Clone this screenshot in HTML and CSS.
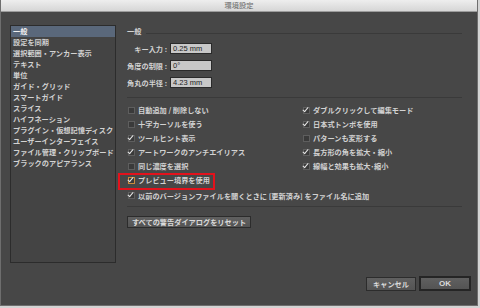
FILE: index.html
```html
<!DOCTYPE html>
<html lang="ja">
<head>
  <meta charset="UTF-8">
  <title>環境設定</title>
  <link rel="stylesheet" href="styles.css">
</head>
<body>
  <div class="window">
    <div class="titlebar">環境設定</div>

    <div class="content">
      <!-- Category list -->
      <ul class="sidebar">
        <li class="selected">一般</li>
        <li>設定を同期</li>
        <li>選択範囲・アンカー表示</li>
        <li>テキスト</li>
        <li>単位</li>
        <li>ガイド・グリッド</li>
        <li>スマートガイド</li>
        <li>スライス</li>
        <li>ハイフネーション</li>
        <li>プラグイン・仮想記憶ディスク</li>
        <li>ユーザーインターフェイス</li>
        <li>ファイル管理・クリップボード</li>
        <li>ブラックのアピアランス</li>
      </ul>

      <div class="main">
        <div class="heading"><span>一般</span><span class="rule"></span></div>

        <div class="fields">
          <div class="field"><label>キー入力 :</label><span class="input">0.25 mm</span></div>
          <div class="field"><label>角度の制限 :</label><span class="input">0°</span></div>
          <div class="field"><label>角丸の半径 :</label><span class="input">4.23 mm</span></div>
        </div>

        <div class="separator"></div>

        <div class="checks">
          <div class="check"><span class="box"></span>自動追加 / 削除しない</div>
          <div class="check on"><span class="box"></span>ダブルクリックして編集モード</div>
          <div class="check"><span class="box"></span>十字カーソルを使う</div>
          <div class="check on"><span class="box"></span>日本式トンボを使用</div>
          <div class="check on"><span class="box"></span>ツールヒント表示</div>
          <div class="check"><span class="box"></span>パターンも変形する</div>
          <div class="check on"><span class="box"></span>アートワークのアンチエイリアス</div>
          <div class="check on"><span class="box"></span>長方形の角を拡大・縮小</div>
          <div class="check"><span class="box"></span>同じ濃度を選択</div>
          <div class="check on"><span class="box"></span>線幅と効果も拡大･縮小</div>
          <div class="check on focus marked"><span class="box"></span>プレビュー境界を使用</div>
          <div class="check on wide"><span class="box"></span>以前のバージョンファイルを開くときに [更新済み] をファイル名に追加</div>
        </div>

        <div class="separator lower"></div>

        <button class="btn reset">すべての警告ダイアログをリセット</button>
      </div>
    </div>

    <div class="footer">
      <button class="btn cancel">キャンセル</button>
      <button class="btn ok">OK</button>
    </div>
  </div>
</body>
</html>
```

FILE: styles.css
```css
body {
  margin: 0;
  background-color: #d4d4d4;
  font-family: "Noto Sans CJK JP", "Liberation Sans", sans-serif;
  font-size: 7.2px;
  font-weight: bold;
  color: #d2d2d2;
}

.window {
  width: 476px;
  height: 305px;
  background-color: #474747;
  border: 1px solid #6e6e6e;
  border-top: none;
  display: flex;
  flex-direction: column;
}

.titlebar {
  height: 11px;
  line-height: 11px;
  text-align: center;
  color: #666;
  font-weight: normal;
  background: linear-gradient(#eeeeee, #d6d6d6);
  border-bottom: 1px solid #9c9c9c;
}

.content {
  display: flex;
  padding: 13px 0 0 9px;
}

/* left list */
.sidebar {
  list-style: none;
  margin: 0;
  padding: 0;
  width: 104px;
  height: 236px;
  background-color: #444;
  border: 1px solid #2c2c2c;
}

.sidebar li {
  height: 11px;
  line-height: 11px;
  padding-left: 2px;
  white-space: nowrap;
}

.sidebar li.selected {
  background-color: #5a687b;
  color: #f0f0f0;
}

/* right side */
.main {
  margin-left: 11px;
  width: 335px;
}

.heading {
  display: flex;
  margin-top: 1px;
  height: 11px;
  line-height: 11px;
}

.heading .rule {
  flex: 1;
  margin: 7px 0 0 5px;
  height: 0;
  border-top: 1px solid #3a3a3a;
}

.fields {
  margin-top: 6px;
  display: flex;
  flex-direction: column;
  gap: 6px;
}

.field {
  display: flex;
  align-items: center;
  height: 11px;
}

.field label {
  width: 40px;
  text-align: right;
  white-space: nowrap;
}

.input {
  margin-left: 3px;
  width: 38px;
  height: 9px;
  line-height: 9px;
  padding-left: 2px;
  background-color: #c8c8c8;
  border: 1px solid #2a2a2a;
  color: #222;
  font-family: "Liberation Sans", sans-serif;
  font-size: 7.5px;
  font-weight: normal;
}

.separator {
  margin-top: 9px;
  height: 0;
  border-top: 1px solid #3a3a3a;
}

.separator.lower {
  margin-top: 5px;
}

.checks {
  margin-top: 5px;
  display: grid;
  grid-template-columns: 175px 1fr;
  grid-auto-rows: 14px;
}

.check {
  display: flex;
  align-items: center;
  gap: 3px;
  white-space: nowrap;
  position: relative;
}

.check.wide {
  grid-column: 1 / 3;
  margin-top: 3px;
}

.box {
  width: 5px;
  height: 5px;
  margin-left: 1px;
  background-color: #3a3a3a;
  border: 1px solid #5e5e5e;
  position: relative;
}

.check.on .box::after {
  content: "";
  position: absolute;
  left: 0px;
  top: -2px;
  width: 2px;
  height: 5px;
  border-right: 1px solid #e6e6e6;
  border-bottom: 1px solid #e6e6e6;
  transform: rotate(40deg);
}

.check.focus .box {
  border-color: #c98a3c;
}

/* red annotation frame */
.check.marked::before {
  content: "";
  position: absolute;
  left: -9px;
  top: 0;
  width: 93px;
  height: 13px;
  border: 2px solid #e3121c;
}

.btn {
  font-family: "Noto Sans CJK JP", "Liberation Sans", sans-serif;
  font-size: 7.2px;
  font-weight: bold;
  color: #dadada;
  background: linear-gradient(#606060, #545454);
  border: 1px solid #2c2c2c;
  padding: 0;
  margin: 0;
}

.reset {
  margin-top: 9px;
  width: 124px;
  height: 12px;
  line-height: 10px;
}

.footer {
  display: flex;
  justify-content: flex-end;
  gap: 3px;
  margin-top: 13px;
  padding-right: 6px;
}

.cancel {
  width: 50px;
  height: 14px;
  margin-top: 1px;
}

.ok {
  width: 52px;
  height: 15px;
  border: 2px solid #252525;
  font-family: "Liberation Sans", sans-serif;
  font-size: 8px;
}
```
